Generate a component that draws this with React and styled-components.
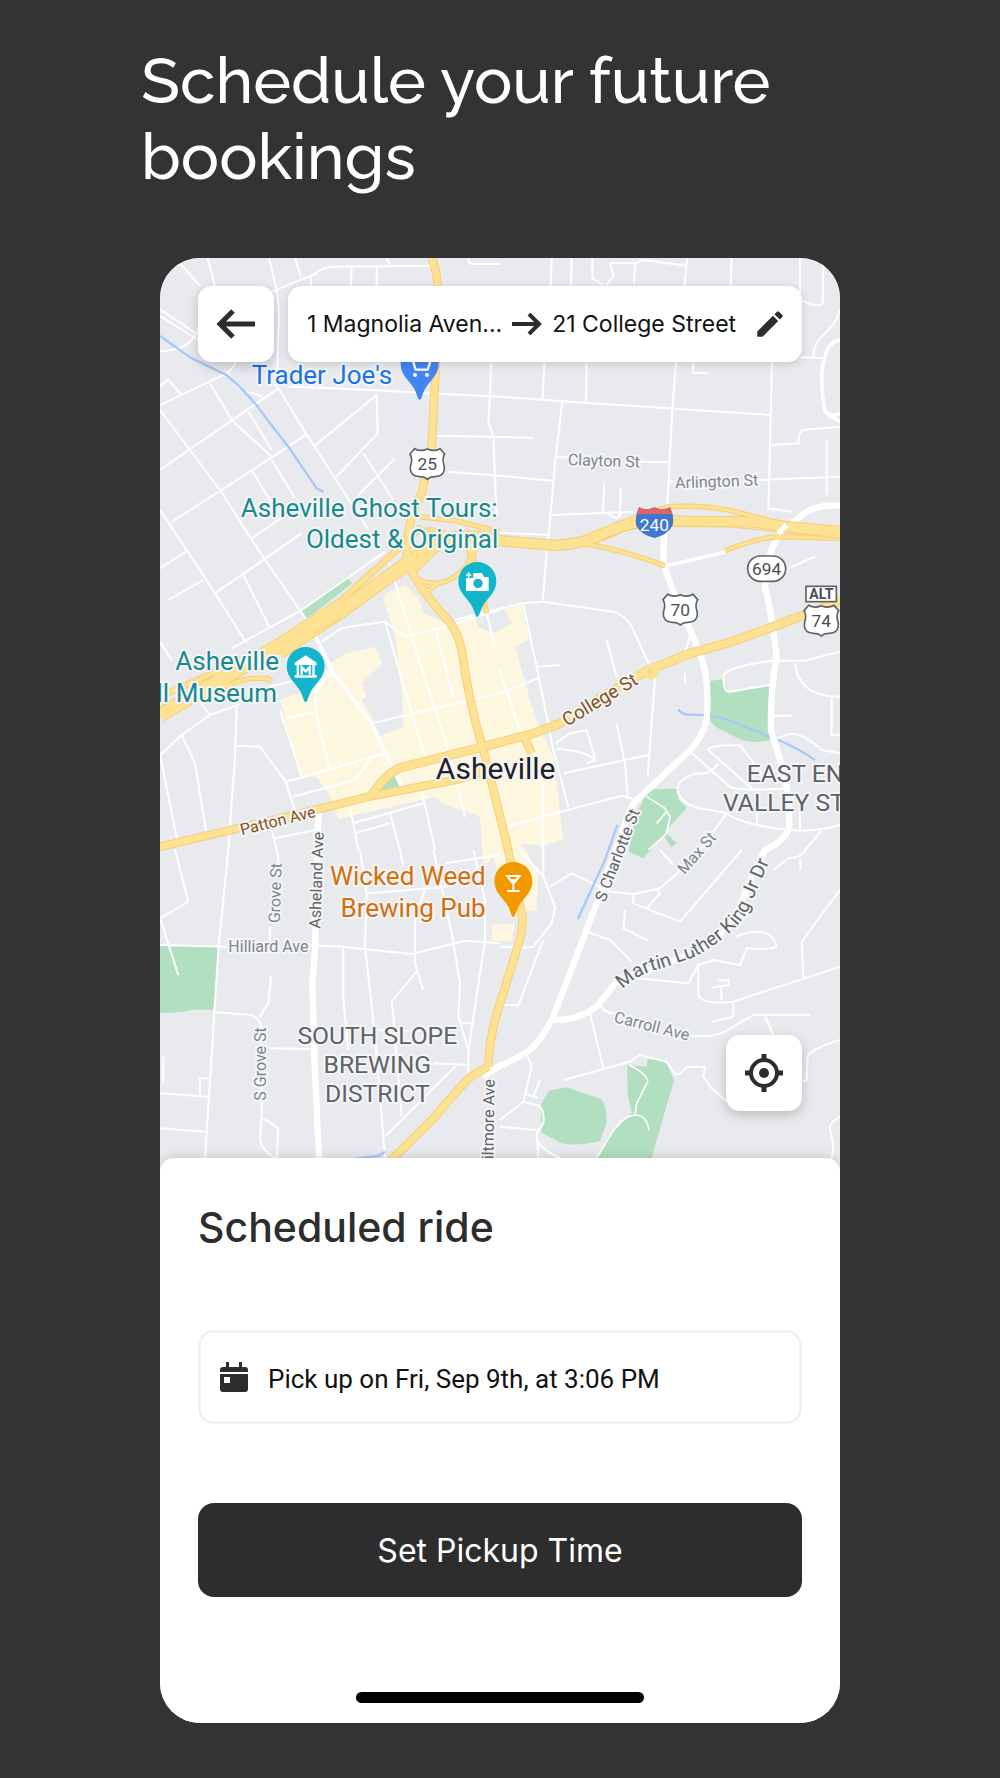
import React from "react";
import styled, { createGlobalStyle } from "styled-components";
import { MdEdit } from "react-icons/md";

const minorRoads = [
  "M75 40L135 108M158 24L180 108M342 24L365 120Q376 190 370 250L365 410M420 24L438 80",
  "M350 125L480 72Q500 52 530 50L830 47M468 72V108M590 50L588 108M665 50V108M695 24L704 46M940 24Q938 42 955 42H1035",
  "M15 178L130 255M15 198L130 270M15 305Q60 300 85 290Q120 270 130 235",
  "M240 336Q235 355 215 370L15 465M15 410L40 388L75 430",
  "M15 660L225 515L370 415L350 395M50 815L200 720L455 553M370 415L455 553L640 840",
  "M400 410L540 415L1035 440L1310 460L1845 495M165 400L230 510L350 620M350 630L420 745",
  "M220 370Q240 410 270 428Q310 425 330 450M280 485L350 600M15 480L195 720L310 900L455 1110",
  "M475 590L665 435L668 550L545 680M625 610L715 750M720 625L610 735M290 660L350 760M290 865L400 790",
  "M15 780L95 900L180 1030L275 1180M15 955L100 900M40 1050L145 990M265 975L345 1135M180 1030L440 850",
  "M845 557L1135 563M880 665L1035 677L1190 692M1008 340L1005 437L1000 520Q1012 545 1015 560L1025 800",
  "M1190 24L1187 108M1250 24L1248 108M1312 24V85L1345 105M1355 105L1376 75L1365 40H1440L1465 30L1595 47M1441 40L1436 100",
  "M1597 24L1588 108M1730 24L1727 108M1935 24V150Q1995 175 2003 160L2005 45M2055 180Q2045 220 2000 260Q1975 285 1975 320M1935 322L2010 325",
  "M2055 530L1945 540Q1930 545 1930 580L1850 585M1168 336L1163 445M1295 336L1293 460M1563 336L1552 475L1537 770M1615 336V368L1660 370",
  "M1851 336L1847 500L1840 780M1222 455L1200 640L1180 870M1205 622H1240M1450 635L1540 637M1540 695H1560M1810 690L2055 680M2015 570V735",
  "M1190 795L1435 785M1348 700L1343 785M1397 715L1395 795Q1385 815 1360 790M1035 848L1185 855M1840 775L1910 785",
  "M1175 900L1163 1055M900 1110L1100 1060L1163 1055L1375 1085Q1415 1100 1430 1130L1485 1250L1500 1285L1478 1580M1355 1170L1385 1280",
  "M1105 1065L1145 1250L1195 1500L1240 1670M1145 1250L1215 1245M650 1420L1035 1330L1150 1285M1030 1250L1095 1440L1145 1530L1165 1620L1163 1800",
  "M1200 1480L1245 1450L1295 1440L1320 1525L1270 1505L1205 1495M1290 1510L1320 1530L1295 1540M1385 1420L1410 1540L1418 1640M1225 1570L1480 1515M1050 1730L1400 1637L1445 1650",
  "M1600 1500L1725 1610Q1750 1625 1905 1615M1660 1500Q1660 1485 1755 1485L1835 1590M1660 1500L1795 1620M1690 1540Q1660 1580 1620 1570Q1565 1590 1568 1620Q1575 1670 1665 1680L1715 1690L1635 1800",
  "M1715 1690Q1770 1730 1935 1742Q2000 1742 2055 1725M1805 1725L1810 1640M1705 1275Q1725 1250 1850 1232H1950L2055 1205M1705 1275Q1705 1330 1725 1325L1845 1305M1920 1240Q1930 1340 2055 1340M2030 1345V1455H2055M1855 1397H1910M1850 1470L1910 1450Q1960 1460 2000 1500L2055 1510",
  "M1900 955L1980 920M1605 1160L1590 1205M1590 1270V1300M1935 1745V1680M2000 1742L1950 1800",
  "M230 1195L440 1080L690 905M15 1175L50 1230M15 1515L80 1455L165 1395L260 1360M80 1455L120 1540L155 1755M15 1515L70 1785M165 1395L130 1350",
  "M245 1365L240 1520L220 1800L190 2100L150 2724M245 1487L315 1490Q350 1540 390 1590L420 1680M375 1380L440 1580M395 1405L480 1385",
  "M340 1310L490 1275M500 1175L560 1135Q610 1125 690 1115L750 1160L850 1135L1035 1080M700 930L770 1160L880 1500L930 1700M690 1115L770 1390L810 1520M840 1135L895 1340M995 1090L1020 1190",
  "M480 1330Q490 1290 540 1270M480 1330L485 1400L525 1560M395 1595L690 1510M415 1640L600 1590L645 1530M585 1670L610 1800M595 1720L805 1660M800 1620L840 1800M705 1690L735 1800M600 1750L705 1720M350 1740L365 1800M360 1765L480 1740",
  "M60 1800L100 1955L15 2005L70 2175M365 1800L375 1860M345 2030V2080M348 2180L340 2260L315 2300M15 2085L215 2090M460 2085L560 2090L770 2112L930 2072L1035 2080",
  "M180 2287L290 2295Q320 2310 320 2340V2600L315 2670Q320 2700 360 2724M320 2605Q360 2620 370 2640L365 2724M335 2395L480 2397M160 2485H135V2535M15 2530L160 2540M15 2635L150 2645M25 2420V2500",
  "M615 1800L635 1930L630 2090L660 2360L690 2724M565 2095V2250L580 2400M640 1930L880 1910M735 1800L745 1850M835 1800L890 2050L915 2200L910 2300L940 2400V2470",
  "M810 1920L780 2000V2140L805 2220M785 2165L710 2255L715 2300L740 2600M955 1800L990 1950V2070L960 2270L940 2400M670 2340L860 2345M920 2320H960M835 2440L940 2445M900 2450L690 2660M870 1840L1035 1815",
  "M1095 1800L1165 1880V1800M1165 1880L1200 1970L1190 2020L1135 2090Q1120 2095 1035 2090M1185 1910L1250 1870L1365 1925L1435 1932L1515 1915Q1570 1870 1635 1800",
  "M1165 2070L1090 2265H1035M1300 2045L1365 2070L1430 2135M1435 1935V1960L1575 2015L1760 1800M1475 1975L1515 1930L1505 1918M1410 1980L1405 2035L1480 2072M1515 1800L1555 1845",
  "M1740 2060Q1850 2020 1865 2090Q1845 2100 1775 2095L1755 2145L1675 2130L1630 2145L1600 2200L1445 2185M1630 2145L1630 2235Q1640 2265 1735 2255L2055 2150M1945 2185L1940 2075L1995 2000L2055 1920",
  "M1670 2315L1735 2300V2255M1700 2250L1698 2212M1670 2213L1720 2205L1722 2190L1690 2192M1305 2290L1345 2455M1225 2490L1425 2435L1455 2415L1535 2435L1560 2472H1575L1595 2450H1650L1645 2480L1670 2515L1715 2555",
  "M1335 2265Q1350 2290 1375 2290M1600 2355Q1680 2370 1735 2330L1795 2295H1965M1830 2300L1855 2355M2055 2370Q1960 2400 1958 2420L1955 2490L1943 2495M1115 2410L1130 2450L1105 2555L1150 2567Q1170 2580 1165 2620L1145 2650L1150 2724",
  "M1035 2610L1105 2555M1035 2630L1145 2640M1145 2670Q1160 2700 1215 2724M2055 2600Q2020 2620 2025 2640Q2040 2690 2030 2724M1855 1860L1900 1825L1930 1820L1955 1800M1936 1825V1860M1155 2490L1135 2540M1110 2530L1150 2545",
];

const majorRoads = [
  "M1530 770L1525 930Q1535 985 1580 1080L1635 1210Q1665 1290 1655 1410Q1640 1470 1595 1510L1435 1660Q1415 1700 1400 1750L1325 1960L1195 2300Q1160 2370 1125 2400Q1080 2430 1035 2447L985 2480",
  "M2055 768Q1980 760 1935 800L1885 840Q1845 885 1835 960L1830 1010Q1850 1090 1865 1220Q1845 1330 1848 1440L1885 1560Q1905 1640 1902 1730Q1895 1770 1830 1800L1790 1880L1750 1980Q1700 2060 1640 2100L1480 2160L1380 2200L1330 2265Q1270 2315 1185 2310",
  "M490 1690L480 2100L472 2200L478 2420L492 2724",
];

const mediumRoads = [
  "M470 1135L535 1270L650 1420L740 1610",
  "M1535 947L1715 905",
  "M2055 270Q2020 275 2010 320Q1990 380 2010 485L2055 515M2018 500L2055 490",
  "M480 1330Q500 1290 530 1270L525 1240",
];

const highways = [
  { w: 44, d: "M15 1395L180 1300L340 1205L540 1095L750 945L850 880" },
  { w: 20, d: "M15 1340L330 1200L560 1050L720 905L800 830M380 1215L540 1110L640 1040" },
  { w: 16, d: "M350 1295L338 1285H290Q250 1290 200 1315L120 1350" },
  { w: 34, d: "M770 960L850 880Q900 840 1035 872L1200 886Q1290 885 1400 830Q1470 805 1600 815L1780 815L2055 850" },
  { w: 16, d: "M790 800L900 812L1035 845M1235 885L1420 810L1540 770Q1640 765 1720 780L1900 825M1280 880Q1390 895 1530 948M1710 903Q1800 865 1870 860L2055 865M760 860Q810 825 870 850M1700 805L2055 835" },
  { w: 16, d: "M925 890Q960 900 935 950Q890 995 850 1000L805 1030M770 960Q775 1000 850 1000M945 890Q970 960 995 1090M940 940L960 900" },
  { w: 26, d: "M830 24Q855 90 848 160L840 400L830 590L800 730Q750 820 757 930Q770 985 860 1090Q905 1130 920 1200Q940 1350 985 1500L1055 1780L1100 1990Q1110 2030 1085 2100L1035 2260Q1000 2370 1000 2450" },
  { w: 26, d: "M1000 2450Q970 2465 945 2482Q880 2550 840 2600L705 2734" },
  { w: 26, d: "M15 1790L250 1735L480 1680L640 1640L900 1590L1000 1560" },
  { w: 28, d: "M650 1635Q690 1575 730 1555L985 1490L1130 1452L1215 1420L1360 1330L1470 1265L1600 1212L1730 1175L1860 1128L2000 1075L2055 1050" },
  { w: 26, d: "M1105 1455L1130 1510" },
];

const parks = [
  "M440 1080L575 980L592 1000L455 1106Z",
  "M675 1622L715 1565L742 1606Z",
  "M1665 1293L1702 1288L1722 1325L1843 1304L1847 1470Q1795 1482 1760 1470L1680 1430L1658 1400Z",
  "M1480 1618L1565 1616L1570 1650L1597 1672L1530 1745L1565 1780L1548 1792L1525 1755L1465 1825L1420 1805L1440 1700Z",
  "M15 2085L192 2090L175 2280Q110 2275 85 2285L15 2290Z",
  "M1157 2565L1182 2522L1235 2512L1340 2548Q1355 2570 1355 2620L1335 2672Q1270 2690 1220 2680L1160 2648Z",
  "M1417 2445L1475 2450L1478 2428Q1510 2425 1535 2440L1557 2490L1485 2740H1320L1360 2660L1430 2590L1418 2530Z",
];

const rivers = [
  "M15 258L110 325L215 375Q290 440 330 500L400 590L485 715L505 725",
  "M1570 1378Q1580 1395 1610 1394Q1680 1395 1720 1410L1870 1470Q1930 1495 1980 1530",
  "M1387 1725L1350 1830L1268 2008",
  "M600 2726L670 2718L690 2705",
];

function Pin({ x, y, color, children }) {
  return (
    <g transform={`translate(${x} ${y})`}>
      <path
        d="M0 106C-6 106 -8 88 -16 74C-28 50 -57 34 -57 -2A57 57 0 0 1 57 -2C57 34 28 50 16 74C8 88 6 106 0 106Z"
        fill={color}
      />
      {children}
    </g>
  );
}

function Shield({ x, y, number }) {
  return (
    <g transform={`translate(${x} ${y})`}>
      <path
        d="M-38 -44Q-20 -34 0 -43Q20 -34 38 -44L52 -28Q43 -12 50 6Q56 38 22 40Q8 40 0 48Q-8 40 -22 40Q-56 38 -50 6Q-43 -12 -52 -28Z"
        fill="#fff"
        stroke="#5f6368"
        strokeWidth="5"
      />
      <RoadNumber y="20">{number}</RoadNumber>
    </g>
  );
}

function CityMap() {
  return (
    <MapSvg
      viewBox="15 24 2040 2760"
      preserveAspectRatio="xMidYMin slice"
      role="img"
      aria-label="Map of Asheville"
    >
      <rect x="0" y="0" width="2080" height="2800" fill="#e8eaed" />
      <path
        fill="#fef7e0"
        d="M375 1350L480 1310L530 1235L575 1210L660 1190L682 1240L620 1300L640 1355L665 1360L745 1350L735 1290L722 1160L685 1050L690 1030L750 1005L790 1040L805 1090L880 1125L960 1100L970 1130L1015 1150L1070 1120L1050 1078L1100 1062L1122 1170L1080 1190L1140 1400L1195 1520L1225 1770L1165 1788L1100 1780L1150 1870L1145 1980L1060 1995L1015 1820L985 1850L975 1700L870 1665L840 1640L550 1708L525 1640L485 1580H435ZM1010 2025L1080 2020L1070 2075L1010 2072Z"
      />
      <path fill="#e8eaed" d="M620 1350L690 1290L740 1340L745 1430L670 1460L650 1400Z" />
      {parks.map((d) => (
        <path key={d} d={d} fill="#b1dfbf" />
      ))}
      <Lines $color="#ffffff" $width={6}>
        {minorRoads.map((d) => (
          <path key={d} d={d} />
        ))}
      </Lines>
      <Lines $color="#ffffff" $width={11}>
        {mediumRoads.map((d) => (
          <path key={d} d={d} />
        ))}
      </Lines>
      <Lines $color="#a8c7fa" $width={7}>
        {rivers.map((d) => (
          <path key={d} d={d} />
        ))}
      </Lines>
      <Lines $color="#ffffff" $width={5}>
        <path d="M1475 1640L1530 1675L1545 1700L1535 1750L1480 1800M1505 1720L1535 1685M1422 2445Q1475 2470 1478 2495L1445 2560L1440 2595Q1475 2595 1482 2640M1440 2595Q1400 2600 1370 2650L1325 2724" />
      </Lines>
      <Lines $color="#ffffff" $width={19}>
        {majorRoads.map((d) => (
          <path key={d} d={d} />
        ))}
      </Lines>
      <Lines $color="#f6cf75">
        {highways.map((road) => (
          <path key={road.d} d={road.d} strokeWidth={road.w} />
        ))}
      </Lines>
      <Lines $color="#fde293">
        {highways.map((road) => (
          <path key={road.d} d={road.d} strokeWidth={road.w - 6} />
        ))}
      </Lines>
      <Lines $color="#f6cf75" $width={3}>
        <path d="M1330 875Q1400 840 1480 828L1720 830L2055 866M480 1150L560 1100" />
      </Lines>
      <circle cx="1487" cy="1265" r="24" fill="#fde293" />
      <circle cx="1487" cy="1265" r="7" fill="none" stroke="#f6cf75" strokeWidth="3" />
      <path d="M1895 825L1870 850" stroke="#fff" strokeWidth="16" />

      <Pin x={794} y={343} color="#4285f4">
        <path
          d="M-36 -22H-24L-12 16H24L34 -14H-20"
          fill="none"
          stroke="#fff"
          strokeWidth="7"
        />
        <circle cx="-14" cy="32" r="6" fill="#fff" />
        <circle cx="22" cy="32" r="6" fill="#fff" />
      </Pin>
      <Pin x={967} y={995} color="#12b5cb">
        <path d="M-34 -12H-12V-26H14L20 -14H34V28H-34Z" fill="#fff" />
        <path d="M-26 -30V-10M-36 -20H-16" stroke="#12b5cb" strokeWidth="14" />
        <path d="M-26 -28V-12M-34 -20H-18" stroke="#fff" strokeWidth="5" />
        <circle cx="2" cy="5" r="14" fill="#12b5cb" />
      </Pin>
      <Pin x={452} y={1250} color="#12b5cb">
        <path
          d="M0 -34L33 -12V-4H27V25H33V33H-33V25H-27V-4H-33V-12Z"
          fill="#fff"
        />
        <path d="M-20 -5H20V26H-20Z" fill="#12b5cb" />
        <path d="M-12 24V2L0 14L12 2V24" fill="none" stroke="#fff" strokeWidth="7" />
      </Pin>
      <Pin x={1075} y={1895} color="#f29900">
        <path
          d="M-25 -20H25L3 8V25H19V31H-19V25H-3V8ZM-12 -14L-7 -7H7L12 -14Z"
          fill="#fff"
          fillRule="evenodd"
        />
      </Pin>

      <Shield x={817} y={640} number="25" />
      <Shield x={1576} y={1077} number="70" />
      <Shield x={1999} y={1110} number="74" />
      <rect x="1778" y="918" width="114" height="76" rx="38" fill="#fff" stroke="#5f6368" strokeWidth="5" />
      <RoadNumber x="1835" y="975">694</RoadNumber>
      <rect x="1953" y="1009" width="91" height="46" fill="#fff" stroke="#5f6368" strokeWidth="5" />
      <RoadNumber x="1999" y="1047" $size={42} $weight={700}>ALT</RoadNumber>
      <path
        d="M1452 772Q1475 784 1498 772Q1521 784 1545 772Q1560 800 1552 828Q1536 855 1498 864Q1460 855 1444 828Q1438 800 1452 772Z"
        fill="#3f78cf"
      />
      <path d="M1452 772Q1475 784 1498 772Q1521 784 1545 772L1552 792H1446Z" fill="#df6464" />
      <RoadNumber x="1498" y="843" $color="#fff">240</RoadNumber>

      <Label x="290" y="402" $size={78} $color="#1a73e8">Trader Joe's</Label>
      <Label x="1028" y="802" $size={78} $color="#188a8d" textAnchor="end">
        Asheville Ghost Tours:
      </Label>
      <Label x="1030" y="895" $size={78} $color="#188a8d" textAnchor="end">
        Oldest &amp; Original
      </Label>
      <Label x="372" y="1261" $size={78} $color="#188a8d" textAnchor="end">Asheville</Label>
      <Label x="366" y="1356" $size={78} $color="#188a8d" textAnchor="end">ll Museum</Label>
      <Label x="992" y="1906" $size={78} $color="#d56e0c" textAnchor="end">Wicked Weed</Label>
      <Label x="992" y="2000" $size={78} $color="#d56e0c" textAnchor="end">Brewing Pub</Label>
      <Label x="1022" y="1588" $size={90} $color="#202124" textAnchor="middle">Asheville</Label>
      <Label x="667" y="2382" $size={74} textAnchor="middle">SOUTH SLOPE</Label>
      <Label x="667" y="2470" $size={74} textAnchor="middle">BREWING</Label>
      <Label x="667" y="2557" $size={74} textAnchor="middle">DISTRICT</Label>
      <Label x="1775" y="1597" $size={74}>EAST EN</Label>
      <Label x="1704" y="1684" $size={74}>VALLEY ST</Label>
      <Label x="1238" y="645" $size={48} $color="#80868b" transform="rotate(2 1238 645)">
        Clayton St
      </Label>
      <Label x="1561" y="715" $size={48} $color="#80868b" transform="rotate(-2 1561 715)">
        Arlington St
      </Label>
      <Label x="220" y="2107" $size={48} $color="#80868b">Hilliard Ave</Label>
      <Label x="1375" y="2316" $size={48} $color="#80868b" transform="rotate(14 1375 2316)">
        Carroll Ave
      </Label>
      <Label x="374" y="2020" $size={48} $color="#80868b" transform="rotate(-88 374 2020)">
        Grove St
      </Label>
      <Label x="334" y="2552" $size={48} $color="#80868b" transform="rotate(-90 334 2552)">
        S Grove St
      </Label>
      <Label x="496" y="2036" $size={48} transform="rotate(-88 496 2036)">Asheland Ave</Label>
      <Label x="1015" y="2728" $size={48} transform="rotate(-89 1015 2728)">iltmore Ave</Label>
      <Label x="1589" y="1876" $size={48} $color="#80868b" transform="rotate(-49 1589 1876)">
        Max St
      </Label>
      <Label x="1350" y="1958" $size={48} transform="rotate(-69 1350 1958)">S Charlotte St</Label>
      <Label x="260" y="1756" $size={48} $color="#855019" transform="rotate(-14 260 1756)">
        Patton Ave
      </Label>
      <Label x="1236" y="1430" $size={56} $color="#855019" transform="rotate(-31 1236 1430)">
        College St
      </Label>
      <path id="mlk" d="M1403 2218Q1450 2170 1520 2155L1620 2120Q1730 2060 1775 1990L1850 1820L1885 1750" fill="none" />
      <Label $size={58}>
        <textPath href="#mlk">Martin Luther King Jr Dr</textPath>
      </Label>
    </MapSvg>
  );
}

function App() {
  return (
    <>
      <GlobalStyle />
      <Page>
        <Heading>Schedule your future bookings</Heading>
        <Phone>
          <MapArea>
            <CityMap />
            <TopBar>
              <SquareButton type="button" aria-label="Back">
                <svg width="40" height="30" viewBox="0 0 40 30" fill="none">
                  <path d="M39 15H5M17 2L4 15L17 28" stroke="#2d2d2d" strokeWidth="5" />
                </svg>
              </SquareButton>
              <Route>
                <span>1 Magnolia Aven...</span>
                <svg width="30" height="22" viewBox="0 0 30 22" fill="none">
                  <path d="M0 11H27M17 1L27 11L17 21" stroke="#2d2d2d" strokeWidth="4" />
                </svg>
                <span>21 College Street</span>
                <EditButton type="button" aria-label="Edit route">
                  <MdEdit size={34} />
                </EditButton>
              </Route>
            </TopBar>
            <SquareButton type="button" aria-label="My location">
              <svg width="38" height="38" viewBox="0 0 38 38" fill="none" stroke="#2d2d2d">
                <circle cx="19" cy="19" r="13" strokeWidth="4" />
                <path d="M19 0V6M19 32V38M0 19H6M32 19H38" strokeWidth="5" />
                <circle cx="19" cy="19" r="5" fill="#2d2d2d" stroke="none" />
              </svg>
            </SquareButton>
          </MapArea>
          <Sheet>
            <SheetTitle>Scheduled ride</SheetTitle>
            <DateField>
              <svg width="28" height="30" viewBox="0 0 28 30">
                <path
                  fill="#2d2d2d"
                  d="M6 0H9V5H19V0H22V5H25Q28 5 28 8V10H0V8Q0 5 3 5H6ZM0 12H28V27Q28 30 25 30H3Q0 30 0 27ZM4 15V21H10V15Z"
                />
              </svg>
              <input
                type="text"
                readOnly
                aria-label="Pickup time"
                value="Pick up on Fri, Sep 9th, at 3:06 PM"
              />
            </DateField>
            <SubmitButton type="button">Set Pickup Time</SubmitButton>
            <HomeIndicator />
          </Sheet>
        </Phone>
      </Page>
    </>
  );
}

const GlobalStyle = createGlobalStyle`
  * {
    box-sizing: border-box;
  }
  body {
    margin: 0;
    background: #333333;
  }
`;
const Page = styled.main`
  padding: 43px 16% 55px;
  font-family: "Inter", "Roboto", sans-serif;
`;
const Heading = styled.h1`
  margin: 0 -19px 63px;
  color: #ffffff;
  font-family: "Raleway", "Lato", sans-serif;
  font-size: 64px;
  font-weight: 500;
  line-height: 76px;
`;
const Phone = styled.section`
  display: flex;
  flex-direction: column;
  overflow: hidden;
  border-radius: 40px;
  background: #ffffff;
`;
const MapArea = styled.div`
  position: relative;
  display: flex;
  flex-direction: column;
  justify-content: space-between;
  align-items: flex-end;
  height: 920px;
  padding: 28px 38px 67px;
`;
const MapSvg = styled.svg`
  position: absolute;
  inset: 0;
  width: 100%;
  height: 100%;
`;
const Lines = styled.g`
  fill: none;
  stroke: ${(props) => props.$color};
  stroke-width: ${(props) => props.$width};
  stroke-linejoin: round;
`;
const Label = styled.text`
  fill: ${(props) => props.$color || "#5f6368"};
  stroke: #f4f5f7;
  stroke-width: 12px;
  stroke-linejoin: round;
  paint-order: stroke;
  font-family: "Roboto", sans-serif;
  font-size: ${(props) => props.$size}px;
`;
const RoadNumber = styled.text`
  fill: ${(props) => props.$color || "#4a4d51"};
  font-family: "Roboto", sans-serif;
  font-size: ${(props) => props.$size || 52}px;
  font-weight: ${(props) => props.$weight || 400};
  text-anchor: middle;
`;
const TopBar = styled.div`
  position: relative;
  display: flex;
  gap: 14px;
  width: 100%;
`;
const SquareButton = styled.button`
  position: relative;
  display: flex;
  flex: none;
  justify-content: center;
  align-items: center;
  width: 76px;
  height: 76px;
  padding: 0;
  border: none;
  border-radius: 14px;
  background: #ffffff;
  box-shadow: 0 4px 12px rgba(0, 0, 0, 0.2);
`;
const Route = styled.div`
  display: flex;
  flex: 1;
  gap: 10px;
  align-items: center;
  padding: 0 15px 0 19px;
  border-radius: 14px;
  background: #ffffff;
  box-shadow: 0 2px 8px rgba(0, 0, 0, 0.15);
  color: #111111;
  font-size: 23px;
  white-space: nowrap;
`;
const EditButton = styled.button`
  display: flex;
  margin-left: auto;
  padding: 0;
  border: none;
  background: none;
  color: #2d2d2d;
`;
const Sheet = styled.div`
  position: relative;
  display: flex;
  flex-direction: column;
  margin-top: -20px;
  padding: 43px 38px 20px;
  border-radius: 14px 14px 0 0;
  background: #ffffff;
  box-shadow: 0 -2px 8px rgba(0, 0, 0, 0.12);
`;
const SheetTitle = styled.h2`
  margin: 0 0 77px;
  color: #2d2d2d;
  font-size: 41px;
  font-weight: 500;
  line-height: 52px;
`;
const DateField = styled.label`
  display: flex;
  align-items: center;
  gap: 20px;
  height: 94px;
  margin-bottom: 79px;
  padding: 0 19px;
  border: 3px solid #f2f2f4;
  border-radius: 15px;
  input {
    flex: 1;
    min-width: 0;
    padding: 4px 0 0;
    border: none;
    outline: none;
    background: none;
    color: #111111;
    font-family: "Roboto", sans-serif;
    font-size: 26px;
  }
`;
const SubmitButton = styled.button`
  height: 94px;
  margin-bottom: 95px;
  border: none;
  border-radius: 16px;
  background: #2d2d2d;
  color: #ffffff;
  font-family: inherit;
  font-size: 32px;
`;
const HomeIndicator = styled.div`
  align-self: center;
  width: 288px;
  height: 11px;
  border-radius: 6px;
  background: #000000;
`;

export default App;
